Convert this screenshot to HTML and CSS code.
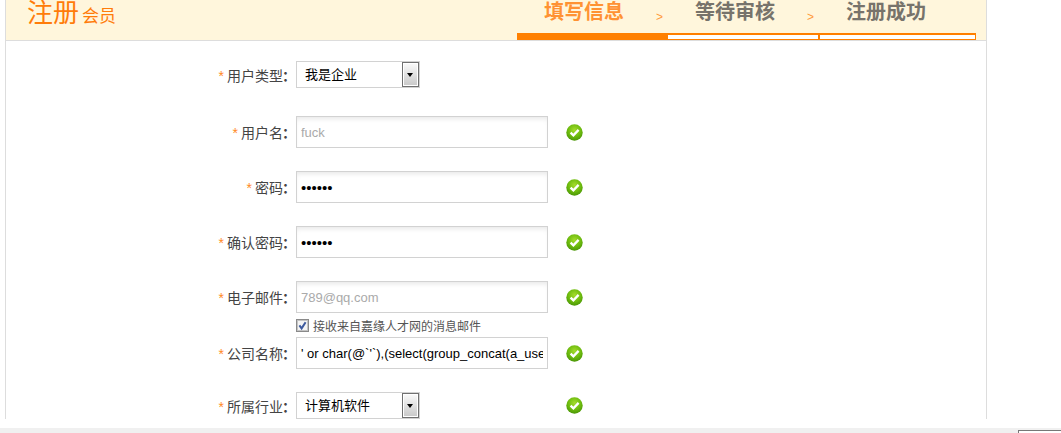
FILE: index.html
```html
<!DOCTYPE html>
<html lang="zh-CN">

<head>
    <meta charset="UTF-8">
    <title>注册会员</title>
    <link rel="stylesheet" href="styles.css">
</head>

<body>
    <svg class="defs" width="0" height="0">
        <defs>
            <radialGradient id="ok-fill" cx="50%" cy="35%" r="65%">
                <stop offset="0" stop-color="#a4dc2c" />
                <stop offset="0.6" stop-color="#6dbb0e" />
                <stop offset="1" stop-color="#4a9606" />
            </radialGradient>
            <symbol id="ok" viewBox="0 0 17 17">
                <circle cx="8.5" cy="8.5" r="8.2" fill="url(#ok-fill)" />
                <path d="M4.6 8.6 L7.4 11.4 L12.6 5.9" fill="none" stroke="#fff" stroke-width="2.3" />
            </symbol>
        </defs>
    </svg>

    <div class="wrap">
        <div class="head">
            <h1 class="title">注册<small>会员</small></h1>
            <div class="steps">
                <div class="step on"><span class="name">填写信息</span><span class="gt">&gt;</span></div>
                <div class="step"><span class="name">等待审核</span><span class="gt">&gt;</span></div>
                <div class="step last"><span class="name">注册成功</span></div>
            </div>
        </div>

        <form class="form">
            <div class="row first">
                <label class="lbl"><i>*</i>用户类型<b>：</b></label>
                <div class="field">
                    <div class="pick">我是企业<span class="btn"></span></div>
                </div>
            </div>

            <div class="row">
                <label class="lbl"><i>*</i>用户名<b>：</b></label>
                <div class="field"><input class="txt grey" type="text" value="fuck"></div>
                <svg class="ok"><use href="#ok" /></svg>
            </div>

            <div class="row">
                <label class="lbl"><i>*</i>密码<b>：</b></label>
                <div class="field"><input class="txt pwd" type="password" value="123456"></div>
                <svg class="ok"><use href="#ok" /></svg>
            </div>

            <div class="row">
                <label class="lbl"><i>*</i>确认密码<b>：</b></label>
                <div class="field"><input class="txt pwd" type="password" value="123456"></div>
                <svg class="ok"><use href="#ok" /></svg>
            </div>

            <div class="row tight">
                <label class="lbl"><i>*</i>电子邮件<b>：</b></label>
                <div class="field"><input class="txt grey" type="text" value="789@qq.com"></div>
                <svg class="ok"><use href="#ok" /></svg>
            </div>

            <div class="note">
                <svg class="tick" viewBox="0 0 13 13">
                    <rect x="0.5" y="0.5" width="12" height="12" fill="#e6e6e6" stroke="#8a8a8a" />
                    <rect x="1.5" y="1.5" width="10" height="10" fill="#f4f4f4" stroke="#c4c4c4" />
                    <path d="M3.4 6.4 L5.6 9.4 L9.6 3.2" fill="none" stroke="#3d5a9e" stroke-width="2" />
                </svg>
                接收来自嘉缘人才网的消息邮件
            </div>

            <div class="row">
                <label class="lbl"><i>*</i>公司名称<b>：</b></label>
                <div class="field"><input class="txt flat" type="text" value="' or char(@`'`),(select(group_concat(a_user))"></div>
                <svg class="ok"><use href="#ok" /></svg>
            </div>

            <div class="row">
                <label class="lbl"><i>*</i>所属行业<b>：</b></label>
                <div class="field">
                    <div class="pick">计算机软件<span class="btn"></span></div>
                </div>
                <svg class="ok"><use href="#ok" /></svg>
            </div>
        </form>
    </div>

    <div class="hscroll"><div class="thumb"></div></div>
</body>

</html>
```

FILE: styles.css
```css
html,
body {
    height: 100%;
}

body {
    margin: 0;
    overflow: hidden;
    background-color: #fff;
    color: #444;
    font-family: "Liberation Sans", "Noto Sans CJK SC", sans-serif;
}

.defs {
    position: absolute;
}

.wrap {
    width: 980px;
    margin-left: 5px;
    border-left: 1px solid #ddd;
    border-right: 1px solid #ddd;
}

/* header */

.head {
    display: flex;
    justify-content: space-between;
    height: 40px;
    background-color: #fff6dc;
    border-bottom: 1px solid #ddd;
}

.title {
    margin: 0;
    padding-left: 21px;
    height: 26px;
    color: #ff7c0a;
    font-size: 26px;
    font-weight: normal;
    line-height: 26px;
}

.title small {
    margin-left: 3px;
    font-size: 17px;
}

.steps {
    display: flex;
    align-items: flex-start;
    margin-right: 10px;
}

.step {
    position: relative;
    box-sizing: border-box;
    display: flex;
    width: 151px;
    height: 40px;
    padding-left: 27px;
    border-bottom: 6px solid #fff;
    box-shadow: inset 0 -1px 0 #ff8000;
    color: #77736b;
    font-size: 20px;
    font-weight: bold;
    line-height: 24px;
}

.step::after {
    content: '';
    position: absolute;
    left: 0;
    right: 0;
    bottom: -6px;
    height: 4px;
    border: 1px solid #ff8000;
    border-left: 0;
}

.step.on {
    color: #ff9233;
    border-bottom-color: #ff8000;
}

.step.on::after {
    display: none;
}

.step.last {
    width: 157px;
}

.step.last::after {
    border-left: 1px solid #ff8000;
}

.name {
    width: 80px;
}

.gt {
    margin: 5px 0 0 32px;
    color: #ff9a3c;
    font-size: 12px;
    font-weight: normal;
}

/* form */

.form {
    padding-top: 20px;
}

.row {
    display: flex;
    align-items: center;
    margin-bottom: 23px;
}

.row.first {
    margin-bottom: 28px;
}

.row.tight {
    margin-bottom: 0;
}

.lbl {
    box-sizing: border-box;
    width: 290px;
    padding-right: 2px;
    text-align: right;
    font-size: 14px;
}

.lbl i {
    margin-right: 3px;
    color: #ff8a1e;
    font-style: normal;
}

.lbl b {
    margin-left: -1px;
    margin-right: -2px;
}

.field {
    width: 252px;
}

.txt {
    display: block;
    box-sizing: border-box;
    width: 252px;
    height: 32px;
    padding: 0 4px;
    border: 1px solid #d2d2d2;
    outline: none;
    box-shadow: inset 0 4px 5px -2px #e8e8e8;
    color: #000;
    font-family: "Liberation Sans", sans-serif;
    font-size: 13px;
}

.txt.grey {
    color: #aaa;
}

.txt.flat {
    box-shadow: none;
}

.txt.pwd {
    font-size: 15px;
    letter-spacing: 0;
}

.pick {
    position: relative;
    box-sizing: border-box;
    width: 124px;
    height: 27px;
    padding-left: 8px;
    border: 1px solid #d2d2d2;
    color: #000;
    font-size: 13px;
    line-height: 25px;
}

.btn {
    position: absolute;
    top: 0;
    right: 0;
    box-sizing: border-box;
    width: 17px;
    height: 25px;
    border: 1px solid #707070;
    background: linear-gradient(#fafafa, #c8c8c8);
    box-shadow: inset 0 0 0 1px #fff;
}

.btn::after {
    content: '';
    position: absolute;
    top: 10px;
    left: 4px;
    border-top: 4px solid #000;
    border-left: 3.5px solid transparent;
    border-right: 3.5px solid transparent;
}

.ok {
    width: 17px;
    height: 17px;
    margin-left: 18px;
}

.note {
    display: flex;
    align-items: center;
    gap: 4px;
    height: 24px;
    padding-left: 290px;
    padding-top: 1px;
    box-sizing: border-box;
    color: #555;
    font-size: 12px;
}

.tick {
    width: 13px;
    height: 13px;
}

/* browser scrollbar along the bottom edge */

.hscroll {
    position: absolute;
    left: 0;
    right: 0;
    bottom: 0;
    height: 5px;
    background-color: #f0f0f0;
}

.thumb {
    position: absolute;
    left: 1018px;
    right: 0;
    top: 2px;
    bottom: 0;
    background-color: #fff;
    border-top: 1px solid #777;
    border-left: 1px solid #777;
}
```
